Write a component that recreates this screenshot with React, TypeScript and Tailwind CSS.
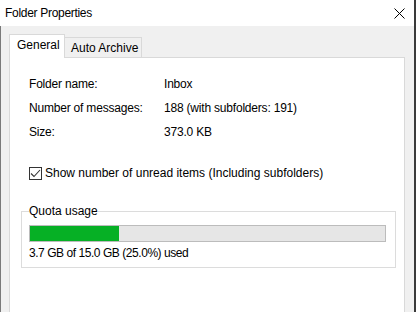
export default function App() {
  return (
    <div className="w-[416px] h-[312px] overflow-hidden bg-[#3a3a3a] font-['Liberation_Sans',Arial,sans-serif] text-[12px] leading-4 text-black">
      <div className="w-[414px] h-full flex flex-col">
        {/* Title bar */}
        <div className="h-[26px] shrink-0 bg-white flex items-center justify-between pl-[5px] pr-[9px]">
          <span className="tracking-[-0.3px]">Folder Properties</span>
          <svg width="11" height="11" viewBox="0 0 11 11" className="block">
            <path d="M0.5 0.5 L10.5 10.5 M10.5 0.5 L0.5 10.5" stroke="#000" strokeWidth="1" />
          </svg>
        </div>

        {/* Body */}
        <div className="flex-1 overflow-hidden bg-[#f0f0f0] border-l border-[#7a7a7a] pt-[8px] pl-[8px] pr-[9px]">
          {/* Tabs */}
          <div className="flex items-end h-[23px]">
            <div className="relative z-10 h-[24px] w-[56px] -mb-px bg-white border-t border-l border-r border-[#d9d9d9] pl-[7px] pt-[2px]">
              General
            </div>
            <div className="h-[20px] w-[77px] bg-[#f0f0f0] border-t border-r border-[#d9d9d9] pl-[6px] pt-[2px]">
              Auto Archive
            </div>
          </div>

          {/* Tab page */}
          <div className="h-[300px] bg-white border border-[#d9d9d9] pl-[11px] pt-[18px]">
            <div className="pl-[8px]">
              <div className="grid grid-cols-[135px_1fr] gap-y-2 tracking-[-0.2px]">
                <span>Folder name:</span>
                <span>Inbox</span>
                <span>Number of messages:</span>
                <span>188 (with subfolders: 191)</span>
                <span>Size:</span>
                <span>373.0 KB</span>
              </div>

              <label className="mt-[25px] flex items-center h-4">
                <svg width="13" height="13" viewBox="0 0 13 13" className="block shrink-0">
                  <rect x="0.5" y="0.5" width="12" height="12" fill="#fff" stroke="#333" />
                  <path d="M2 6.5 L5 9.5 L11 3" fill="none" stroke="#333" strokeWidth="1.1" />
                </svg>
                <span className="ml-[3px]">Show number of unread items (Including subfolders)</span>
              </label>
            </div>

            <fieldset className="mt-[22px] w-[375px] border border-[#dcdcdc] pl-[7px] pt-[6px] pb-[6px]">
              <legend className="px-0">Quota usage</legend>
              <div className="h-[17px] w-[357px] border border-[#bcbcbc] bg-[#e6e6e6]">
                <div className="h-full w-1/4 bg-[#06b025]" />
              </div>
              <div className="mt-[3px] tracking-[-0.45px]">3.7 GB of 15.0 GB (25.0%) used</div>
            </fieldset>
          </div>
        </div>
      </div>
    </div>
  );
}
